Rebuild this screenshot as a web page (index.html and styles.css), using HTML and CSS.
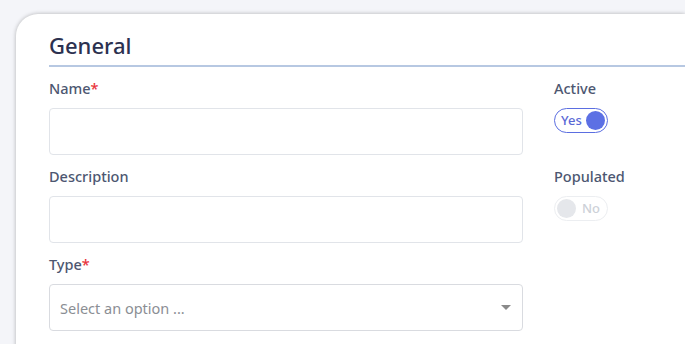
FILE: index.html
```html
<!DOCTYPE html>
<html lang="en">
<head>
  <meta charset="UTF-8">
  <title>General</title>
  <link rel="stylesheet" href="styles.css">
</head>
<body>
  <div class="page">
    <div class="card">
      <h2 class="card-title">General</h2>

      <div class="form-grid">
        <div class="field">
          <label for="f-name">Name<span class="req">*</span></label>
          <input type="text" id="f-name" autocomplete="off">
        </div>
        <div class="field">
          <label>Active</label>
          <div class="toggle on"><span class="toggle-text">Yes</span><span class="knob"></span></div>
        </div>

        <div class="field">
          <label for="f-desc">Description</label>
          <input type="text" id="f-desc" autocomplete="off">
        </div>
        <div class="field">
          <label>Populated</label>
          <div class="toggle off"><span class="knob"></span><span class="toggle-text">No</span></div>
        </div>

        <div class="field">
          <label for="f-type">Type<span class="req">*</span></label>
          <div class="select" id="f-type">
            <span class="placeholder">Select an option ...</span>
            <span class="caret"></span>
          </div>
        </div>
        <div class="field"></div>
      </div>
    </div>
  </div>
</body>
</html>
```

FILE: styles.css
```css
html, body {
  margin: 0;
  padding: 0;
}
body {
  background: #f4f5f9;
  font-family: "Noto Sans", "Open Sans", sans-serif;
  color: #4b5670;
  overflow: hidden;
}

.page {
  padding: 14px 0 0 16px;
}

.card {
  background: #fff;
  border-top-left-radius: 22px;
  box-shadow: 0 0 4px rgba(0, 0, 0, .28);
  padding: 16px 0 40px 33px;
  min-height: 400px;
}

.card-title {
  margin: 0 0 12px;
  font-size: 22px;
  font-weight: 500;
  line-height: 30px;
  color: #2c3150;
  padding-bottom: 5px;
  border-bottom: 2px solid #b7c8e2;
}

.form-grid {
  display: grid;
  grid-template-columns: 474px 1fr;
  column-gap: 31px;
  row-gap: 12px;
}

.field label {
  display: block;
  font-size: 14.5px;
  font-weight: 500;
  line-height: 18px;
  margin-bottom: 11px;
  color: #4d5771;
}
.field .req {
  color: #e8333c;
}

.field input,
.select {
  box-sizing: border-box;
  display: block;
  width: 100%;
  height: 47px;
  border: 1px solid #e1e4e9;
  border-radius: 4px;
  background: #fff;
  font: inherit;
  font-size: 14.5px;
  padding: 0 10px;
  outline: none;
}

.select {
  display: flex;
  align-items: center;
  justify-content: space-between;
  border-color: #d9dbe0;
}
.select .placeholder {
  color: #8b8e94;
  font-size: 14.5px;
}
.select .caret {
  width: 0;
  height: 0;
  border-left: 5px solid transparent;
  border-right: 5px solid transparent;
  border-top: 5px solid #8a8a8a;
  margin-right: 1px;
}

.toggle {
  box-sizing: border-box;
  display: inline-flex;
  align-items: center;
  width: 54px;
  height: 25px;
  border-radius: 13px;
  padding: 0 2px 0 2px;
  font-size: 13px;
  font-weight: 500;
  line-height: 1;
}
.toggle .knob {
  width: 19px;
  height: 19px;
  border-radius: 50%;
}
.toggle.on {
  border: 1.5px solid #5b6ee1;
  justify-content: space-between;
  padding-left: 6px;
}
.toggle.on .toggle-text {
  color: #5a69d6;
}
.toggle.on .knob {
  background: #5c70e4;
}
.toggle.off {
  border: 1.5px solid #eceef1;
  gap: 6px;
}
.toggle.off .knob {
  background: #e5e7eb;
}
.toggle.off .toggle-text {
  color: #cdd1d8;
}
```
